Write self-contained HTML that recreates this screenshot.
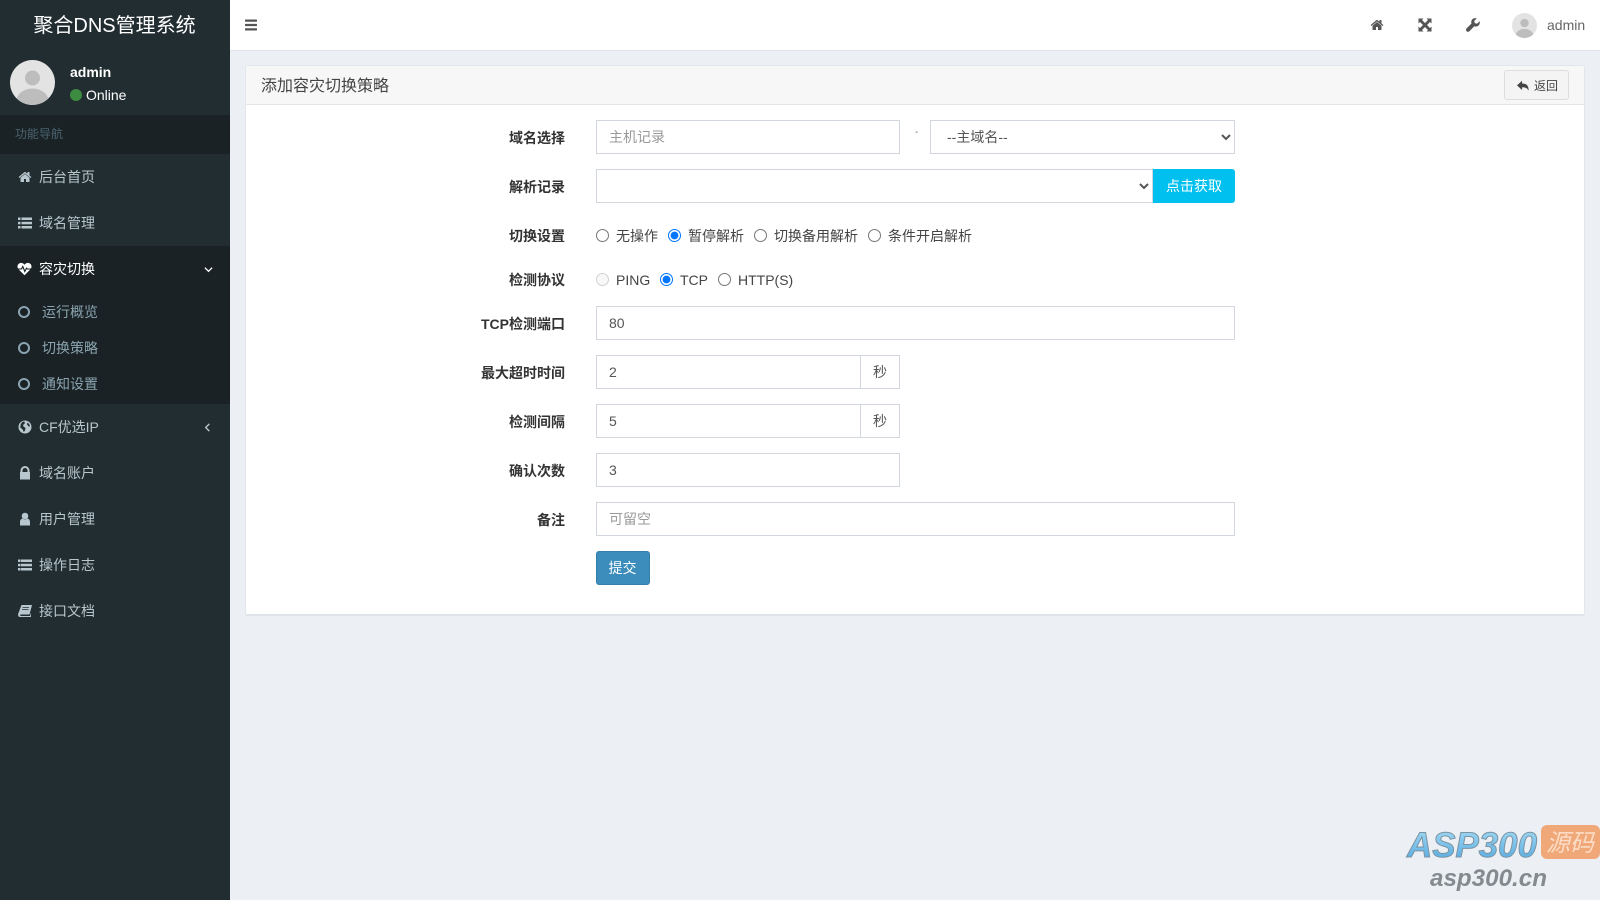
<!DOCTYPE html>
<html lang="zh-CN">
<head>
<meta charset="utf-8">
<title>添加容灾切换策略</title>
<style>
*{box-sizing:border-box}
html,body{margin:0;padding:0;width:1600px;height:900px;overflow:hidden;background:#ecf0f5;font-family:"Liberation Sans","Noto Sans CJK SC",sans-serif;font-size:14px;color:#333}
.a{position:absolute}
#side{position:absolute;left:0;top:0;width:230px;height:900px;background:#222d32}
#logo{position:absolute;left:0;top:1px;width:229px;height:50px;line-height:50px;text-align:center;color:#fff;font-size:20px}
.it{position:absolute;left:0;width:230px;height:46px;line-height:46px;color:#b8c7ce;font-size:14px;padding-left:39px}
.it svg{position:absolute;left:18px;top:16px;width:14px;height:14px;fill:#b8c7ce}
.sub{position:absolute;left:0;width:230px;height:36px;line-height:36px;color:#8aa4af;font-size:14px;padding-left:42px}
.sub i{position:absolute;left:18px;top:12px;width:12px;height:12px;border:2px solid #8aa4af;border-radius:50%}
#top{position:absolute;left:230px;top:0;width:1370px;height:51px;background:#fff;border-bottom:1px solid #dfe3e8}
#card{position:absolute;left:245px;top:65px;width:1340px;height:551px;background:#fff;border:1px solid #e3e6eb;border-bottom:2px solid #e0e3e8;border-radius:3px}
#chead{position:absolute;left:0;top:0;width:1338px;height:39px;background:#f7f7f7;border-bottom:1px solid #e2e4e8}
label.l{position:absolute;left:465px;width:100px;text-align:right;font-weight:bold;font-size:14px;color:#333;line-height:20px;white-space:nowrap}
input.t,select{position:absolute;height:34px;border:1px solid #d2d6de;background:#fff;font:14px "Liberation Sans","Noto Sans CJK SC",sans-serif;color:#555;padding:6px 12px;outline:none;border-radius:0;margin:0}
input.t::placeholder{color:#999;opacity:1}
.ad{position:absolute;left:860px;width:40px;height:34px;line-height:32px;text-align:center;border:1px solid #d2d6de;background:#fff;color:#555;font-size:14px}
input[type=radio]{position:absolute;margin:0;width:13px;height:13px}
.r{position:absolute;font-size:14px;color:#444;line-height:20px;white-space:nowrap}
.btn{position:absolute;text-align:center;color:#fff;font-size:14px;border-radius:3px}
</style>
</head>
<body>
<div id="side">
  <div id="logo">聚合DNS管理系统</div>
  <svg class="a" style="left:10px;top:60px" width="45" height="45" viewBox="0 0 45 45"><defs><clipPath id="c1"><circle cx="22.5" cy="22.5" r="22.5"/></clipPath></defs><circle cx="22.5" cy="22.5" r="22.5" fill="#e3e3e3"/><g clip-path="url(#c1)" fill="#bdbdbd"><circle cx="22.5" cy="18" r="7.5"/><ellipse cx="22.5" cy="41" rx="16" ry="12.5"/></g></svg>
  <div class="a" style="left:70px;top:62px;color:#fff;font-weight:bold;font-size:14px;line-height:20px">admin</div>
  <div class="a" style="left:70px;top:89px;width:12px;height:12px;border-radius:50%;background:#3d8b40"></div>
  <div class="a" style="left:86px;top:85px;color:#fff;font-size:14px;line-height:20px">Online</div>
  <div class="a" style="left:0;top:115px;width:230px;height:39px;background:#1a2226;color:#4b646f;font-size:12px;line-height:39px;padding-left:15px">功能导航</div>

  <div class="it" style="top:154px"><svg viewBox="0 0 1792 1792"><path d="M1472 992v480q0 26-19 45t-45 19h-384v-384h-256v384h-384q-26 0-45-19t-19-45v-480q0-1 .5-3t.5-3l575-474 575 474q1 2 1 6zm223-69l-62 74q-8 9-21 11h-3q-13 0-21-7l-692-577-692 577q-12 8-24 7-13-2-21-11l-62-74q-8-10-7-23.5t11-21.5l719-599q32-26 76-26t76 26l244 204v-195q0-14 9-23t23-9h192q14 0 23 9t9 23v408l219 182q10 8 11 21.5t-7 23.5z"/></svg>后台首页</div>
  <div class="it" style="top:200px"><svg viewBox="0 0 14 14"><rect x="0" y="1.5" width="2.5" height="2.5"/><rect x="0" y="5.8" width="2.5" height="2.5"/><rect x="0" y="10" width="2.5" height="2.5"/><rect x="3.5" y="1.5" width="10.5" height="2.5"/><rect x="3.5" y="5.8" width="10.5" height="2.5"/><rect x="3.5" y="10" width="10.5" height="2.5"/></svg>域名管理</div>

  <div class="a" style="left:0;top:246px;width:230px;height:158px;background:#1a2226"></div>
  <div class="it" style="top:246px;color:#fff"><svg viewBox="0 0 14 14" style="fill:#fff;left:17px;width:15px"><path d="M7 13.2 1 7.2C-.6 5.4-.2 2.6 1.600 1.500 3.600.3 5.800 1 7 2.800 8.200 1 10.400.3 12.400 1.500c1.800 1.100 2.200 3.900.6 5.700z"/><path d="M0 7h4l1.300-2.500 2 5L9 6.200l.8.8H14" fill="none" stroke="#1a2226" stroke-width="1.100"/></svg>容灾切换<svg viewBox="0 0 10 10" style="left:204px;top:19px;width:9px;height:9px"><path d="M1 3l4 4 4-4" fill="none" stroke="#fff" stroke-width="1.500"/></svg></div>
  <div class="sub" style="top:294px"><i></i>运行概览</div>
  <div class="sub" style="top:330px"><i></i>切换策略</div>
  <div class="sub" style="top:366px"><i></i>通知设置</div>

  <div class="it" style="top:404px"><svg viewBox="0 0 14 14"><circle cx="7" cy="7" r="6.500"/><path d="M4.500 1.800 6.500 1.500 6.800 3.500 5 5 5.500 6.500 7.500 8 7 10.500 5.800 12 4.500 9.300 2.200 7.500 2.800 4zM9.500 2.500 11.500 4.500 11.800 6.800 10 6 9 4z" fill="#222d32"/></svg>CF优选IP<svg viewBox="0 0 10 10" style="left:203px;top:19px;width:9px;height:9px"><path d="M7 1 3 5l4 4" fill="none" stroke="#b8c7ce" stroke-width="1.500"/></svg></div>
  <div class="it" style="top:450px"><svg viewBox="0 0 14 14"><path d="M2.500 6V4.500a4.500 4.500 0 0 1 9 0V6h.5v7.500H2V6zm2 0h5V4.500a2.500 2.500 0 0 0-5 0z"/></svg>域名账户</div>
  <div class="it" style="top:496px"><svg viewBox="0 0 14 14"><circle cx="7" cy="4" r="3.300"/><path d="M2 13.500V10c0-2 1.300-3.500 2.700-3.500C5.500 7.300 6.200 7.500 7 7.500s1.500-.2 2.300-1C10.700 6.500 12 8 12 10v3.500z"/></svg>用户管理</div>
  <div class="it" style="top:542px"><svg viewBox="0 0 14 14"><rect x="0" y="1.500" width="2.500" height="2.500"/><rect x="0" y="5.800" width="2.500" height="2.500"/><rect x="0" y="10" width="2.500" height="2.500"/><rect x="3" y="1.500" width="11" height="2.500"/><rect x="3" y="5.800" width="11" height="2.500"/><rect x="3" y="10" width="11" height="2.500"/></svg>操作日志</div>
  <div class="it" style="top:588px"><svg viewBox="0 0 14 14"><path d="M3.500 1H14l-2.500 9.500H2.800C2 10.500 2 12 2.800 12H12l1-3.500v4.500H2C.3 13-.3 11 .3 9.500z"/><path d="M4.500 3.500h6.500M4 5.500h6.500" stroke="#222d32" stroke-width=".8"/></svg>接口文档</div>
</div>

<div id="top"></div>
<svg class="a" style="left:245px;top:18px" width="13" height="14" viewBox="0 0 13 14" fill="#555"><rect y="1.500" width="12" height="2.200" rx=".5"/><rect y="5.900" width="12" height="2.200" rx=".5"/><rect y="10.300" width="12" height="2.200" rx=".5"/></svg>
<svg class="a" style="left:1370px;top:18px" width="14" height="14" viewBox="0 0 1792 1792" fill="#555"><path d="M1472 992v480q0 26-19 45t-45 19h-384v-384h-256v384h-384q-26 0-45-19t-19-45v-480q0-1 .5-3t.5-3l575-474 575 474q1 2 1 6zm223-69l-62 74q-8 9-21 11h-3q-13 0-21-7l-692-577-692 577q-12 8-24 7-13-2-21-11l-62-74q-8-10-7-23.5t11-21.5l719-599q32-26 76-26t76 26l244 204v-195q0-14 9-23t23-9h192q14 0 23 9t9 23v408l219 182q10 8 11 21.5t-7 23.5z"/></svg>
<svg class="a" style="left:1418px;top:18px" width="14" height="14" viewBox="0 0 14 14" fill="#555"><path d="M.5.500h5L4 2l3 3 3-3-1.500-1.500h5v5L12 4 9 7l3 3 1.500-1.500v5h-5L10 12 7 9l-3 3 1.500 1.500h-5v-5L2 10l3-3-3-3-1.500 1.500z"/></svg>
<svg class="a" style="left:1466px;top:18px" width="14" height="14" viewBox="0 0 14 14" fill="#555"><path d="M13.600 3.200 11 5.700 8.800 5.100 8.200 3 10.800.4C9-.3 7 .2 6 1.600 5.200 2.800 5 4.200 5.500 5.500L.6 10.400c-.8.800-.8 2 0 2.800.8.800 2 .8 2.800 0l4.900-4.900c1.300.5 2.700.3 3.900-.5 1.400-1 1.900-3 1.400-4.600z"/></svg>
<svg class="a" style="left:1512px;top:13px" width="25" height="25" viewBox="0 0 45 45"><defs><clipPath id="c2"><circle cx="22.500" cy="22.500" r="22.500"/></clipPath></defs><circle cx="22.500" cy="22.500" r="22.500" fill="#e3e3e3"/><g clip-path="url(#c2)" fill="#bdbdbd"><circle cx="22.500" cy="18" r="7.500"/><ellipse cx="22.500" cy="41" rx="16" ry="12.500"/></g></svg>
<div class="a" style="left:1547px;top:15px;color:#666;font-size:14px;line-height:20px">admin</div>

<div id="card"><div id="chead"></div></div>
<div class="a" style="left:261px;top:76px;font-size:16px;line-height:22px;color:#444">添加容灾切换策略</div>
<div class="a" style="left:1504px;top:70px;width:65px;height:30px;background:#f4f4f4;border:1px solid #ddd;border-radius:3px"></div>
<svg class="a" style="left:1517px;top:80px" width="12" height="12" viewBox="0 0 13 13" fill="#444"><path d="M5.500.8v3C10 3.800 12.800 6 12.500 11.500 11.200 8.600 9 7.800 5.500 7.800v3L0 5.800z"/></svg>
<div class="a" style="left:1534px;top:77px;font-size:12px;line-height:18px;color:#444">返回</div>

<label class="l" style="top:128px">域名选择</label>
<input class="t" style="left:596px;top:120px;width:304px" placeholder="主机记录">
<div class="a" style="left:915px;top:125px;font-size:10px;color:#777;line-height:16px">-</div>
<select style="left:930px;top:120px;width:305px"><option>--主域名--</option></select>

<label class="l" style="top:177px">解析记录</label>
<select style="left:596px;top:169px;width:557px"><option></option></select>
<div class="btn" style="left:1153px;top:169px;width:82px;height:34px;line-height:34px;background:#00c0ef;border-radius:0 3px 3px 0">点击获取</div>

<label class="l" style="top:226px">切换设置</label>
<input type="radio" name="a" style="left:596px;top:229px"><div class="r" style="left:616px;top:226px">无操作</div>
<input type="radio" name="a" checked style="left:668px;top:229px"><div class="r" style="left:688px;top:226px">暂停解析</div>
<input type="radio" name="a" style="left:754px;top:229px"><div class="r" style="left:774px;top:226px">切换备用解析</div>
<input type="radio" name="a" style="left:868px;top:229px"><div class="r" style="left:888px;top:226px">条件开启解析</div>

<label class="l" style="top:270px">检测协议</label>
<input type="radio" name="b" disabled style="left:596px;top:273px"><div class="r" style="left:616px;top:270px">PING</div>
<input type="radio" name="b" checked style="left:660px;top:273px"><div class="r" style="left:680px;top:270px">TCP</div>
<input type="radio" name="b" style="left:718px;top:273px"><div class="r" style="left:738px;top:270px">HTTP(S)</div>

<label class="l" style="top:314px">TCP检测端口</label>
<input class="t" style="left:596px;top:306px;width:639px" value="80">

<label class="l" style="top:363px">最大超时时间</label>
<input class="t" style="left:596px;top:355px;width:265px" value="2">
<div class="ad" style="top:355px">秒</div>

<label class="l" style="top:412px">检测间隔</label>
<input class="t" style="left:596px;top:404px;width:265px" value="5">
<div class="ad" style="top:404px">秒</div>

<label class="l" style="top:461px">确认次数</label>
<input class="t" style="left:596px;top:453px;width:304px" value="3">

<label class="l" style="top:510px">备注</label>
<input class="t" style="left:596px;top:502px;width:639px" placeholder="可留空">

<div class="btn" style="left:596px;top:551px;width:54px;height:34px;background:#3c8dbc;border:1px solid #367fa9;line-height:32px;padding-right:1px">提交</div>

<svg class="a" style="left:1380px;top:810px" width="220" height="90" viewBox="0 0 220 90">
  <defs><linearGradient id="g" x1="0" y1="0" x2="0" y2="1"><stop offset="0" stop-color="#a5dcf6"/><stop offset="1" stop-color="#4fa6de"/></linearGradient></defs>
  <text x="27" y="47" font-family="Liberation Sans,sans-serif" font-size="35" font-weight="bold" font-style="italic" fill="url(#g)" stroke="#7c93a2" stroke-width="1" textLength="130" lengthAdjust="spacingAndGlyphs">ASP300</text>
  <rect x="161" y="15" width="59" height="34" rx="6" fill="#f0a878"/>
  <text x="190" y="41" text-anchor="middle" font-family="Noto Sans CJK SC,sans-serif" font-size="24" font-style="italic" fill="#fbdcc6">源码</text>
  <text x="50" y="76" font-family="Liberation Sans,sans-serif" font-size="24" font-weight="bold" font-style="italic" fill="#858a8f" textLength="117" lengthAdjust="spacingAndGlyphs">asp300.cn</text>
</svg>
</body>
</html>
